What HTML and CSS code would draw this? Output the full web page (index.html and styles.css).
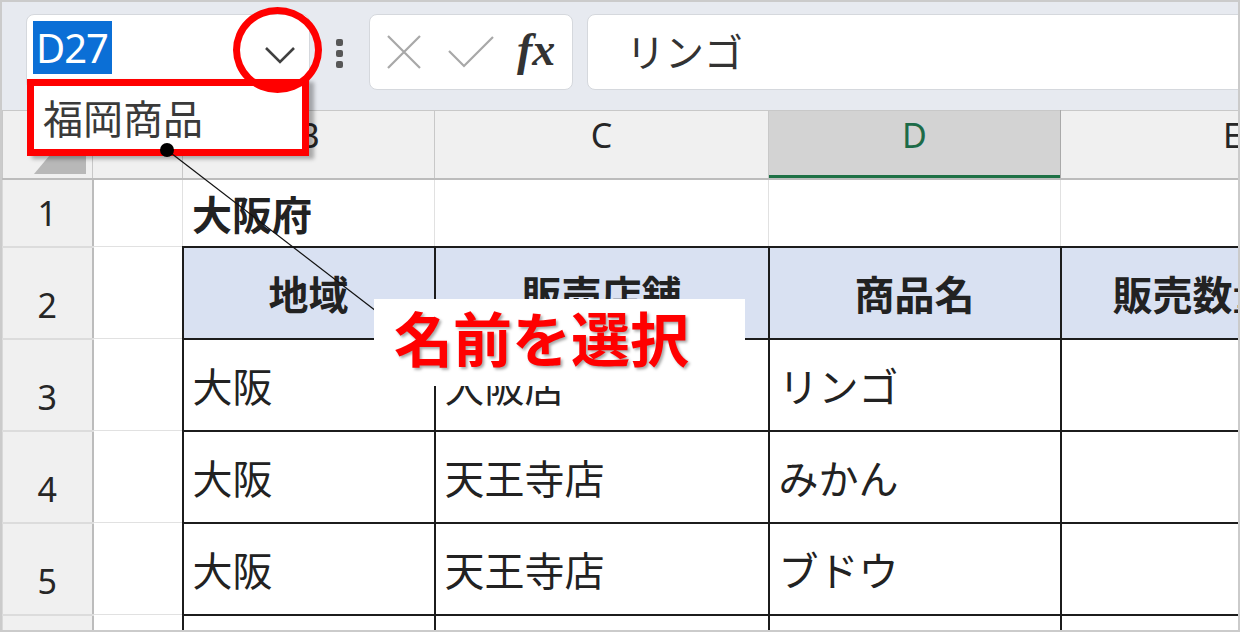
FILE: index.html
```html
<!DOCTYPE html>
<html lang="ja">
<head>
  <meta charset="UTF-8" />
  <title>名前ボックス</title>
  <link rel="stylesheet" href="styles.css">
</head>
<body>
  <div class="frame">
    <div class="toolbar">
      <div class="namebox">
        <span class="ref">D27</span>
        <svg class="chevron" width="32" height="20" viewBox="0 0 32 20"><polyline points="2,3 16,17 30,3" fill="none" stroke="#404040" stroke-width="2.6"/></svg>
      </div>
      <div class="grip"><i></i><i></i><i></i></div>
      <div class="fxbox">
        <svg class="ico-x" width="34" height="34" viewBox="0 0 34 34"><path d="M1 1 L33 33 M33 1 L1 33" stroke="#a8a8a8" stroke-width="2.2"/></svg>
        <svg class="ico-ok" width="46" height="32" viewBox="0 0 46 32"><polyline points="1,15 16,30 45,1" fill="none" stroke="#a8a8a8" stroke-width="2.2"/></svg>
        <span class="fx">fx</span>
      </div>
      <div class="formula">リンゴ</div>
    </div>

    <table class="sheet">
      <colgroup>
        <col style="width:90px"><col style="width:90px"><col style="width:252px"><col style="width:334px"><col style="width:292px"><col style="width:344px">
      </colgroup>
      <thead>
        <tr>
          <th class="corner"><svg width="52" height="62" viewBox="0 0 52 62"><polygon points="0,62 52,62 52,0" fill="#b8b8b8"/></svg></th>
          <th>A</th><th>B</th><th>C</th><th class="sel">D</th><th>E</th>
        </tr>
      </thead>
      <tbody>
        <tr class="r1"><th class="rh">1</th><td></td><td class="title">大阪府</td><td></td><td></td><td></td></tr>
        <tr class="r2"><th class="rh">2</th><td></td><td class="t hd">地域</td><td class="t hd">販売店舗</td><td class="t hd">商品名</td><td class="t hd wide">販売数量（個）</td></tr>
        <tr class="rr"><th class="rh">3</th><td></td><td class="t">大阪</td><td class="t">大阪店</td><td class="t">リンゴ</td><td class="t"></td></tr>
        <tr class="rr"><th class="rh">4</th><td></td><td class="t">大阪</td><td class="t">天王寺店</td><td class="t">みかん</td><td class="t"></td></tr>
        <tr class="rr"><th class="rh">5</th><td></td><td class="t">大阪</td><td class="t">天王寺店</td><td class="t">ブドウ</td><td class="t"></td></tr>
        <tr class="rr"><th class="rh"></th><td></td><td class="t"></td><td class="t"></td><td class="t"></td><td class="t"></td></tr>
      </tbody>
    </table>

    <div class="namelist">福岡商品</div>
    <div class="ring"></div>
    <svg class="leader" width="1240" height="632" viewBox="0 0 1240 632">
      <line x1="167" y1="150" x2="376" y2="311" stroke="#111" stroke-width="1.2"/>
      <circle cx="167" cy="150" r="7" fill="#000"/>
    </svg>
    <div class="callout">名前を選択</div>
  </div>
</body>
</html>
```

FILE: styles.css
```css
body {
  margin: 0;
  background: #fff;
  font-family: "Noto Sans", "Noto Sans CJK JP", sans-serif;
  color: #222;
}
.frame {
  position: relative;
  width: 1240px;
  height: 632px;
  box-sizing: border-box;
  border: 2px solid #cbcbcb;
  overflow: hidden;
  background: #fff;
}

/* formula bar */
.toolbar {
  height: 108px;
  box-sizing: border-box;
  background: #e7eaf0;
  display: flex;
  align-items: flex-start;
  padding: 12px 0 0 24px;
}
.namebox {
  width: 284px;
  height: 76px;
  flex: none;
  box-sizing: border-box;
  background: #fff;
  border: 1px solid #d5d8dd;
  border-radius: 8px;
  display: flex;
  align-items: flex-start;
  justify-content: space-between;
  padding: 6px 13px 0 6px;
}
.ref {
  background: #0b6fd6;
  color: #fff;
  font-size: 40px;
  letter-spacing: -1px;
  line-height: 53px;
  height: 53px;
  padding: 0 4px 0 3px;
}
.chevron {
  margin-top: 24px;
}
.grip {
  margin: 25px 0 0 26px;
  display: flex;
  flex-direction: column;
  gap: 4px;
}
.grip i {
  display: block;
  width: 7px;
  height: 7px;
  border-radius: 2px;
  background: #575757;
}
.fxbox {
  margin-left: 26px;
  width: 204px;
  height: 76px;
  flex: none;
  box-sizing: border-box;
  background: #fff;
  border: 1px solid #d5d8dd;
  border-radius: 8px;
  display: flex;
  align-items: center;
  padding-left: 17px;
}
.ico-x {
  margin-right: 27px;
}
.fx {
  margin-left: 23px;
  font-family: "Liberation Serif", serif;
  font-style: italic;
  font-weight: bold;
  font-size: 46px;
  color: #333;
  line-height: 1;
  margin-top: -4px;
}
.formula {
  margin-left: 14px;
  margin-right: -20px;
  flex: 1;
  height: 76px;
  box-sizing: border-box;
  background: #fff;
  border: 1px solid #d5d8dd;
  border-radius: 8px;
  padding-left: 38px;
  font-family: "Noto Sans CJK JP", sans-serif;
  font-size: 39px;
  line-height: 70px;
  color: #333;
}

/* sheet grid */
.sheet {
  border-collapse: collapse;
  table-layout: fixed;
  width: 1402px;
}
.sheet th,
.sheet td {
  border: 1px solid #e1e1e1;
  padding: 0 9px;
  white-space: nowrap;
  overflow: hidden;
  font-family: "Noto Sans CJK JP", sans-serif;
  font-size: 40px;
  line-height: 48px;
  font-weight: normal;
  text-align: left;
  vertical-align: middle;
}
.sheet thead th {
  height: 68px;
  box-sizing: border-box;
  background: #f0f0f0;
  border: 1px solid #c8c8c8;
  border-bottom: 2px solid #bcbcbc;
  font-family: "Noto Sans", sans-serif;
  font-size: 34px;
  line-height: 40px;
  text-align: center;
  vertical-align: top;
  padding-top: 4px;
  color: #262626;
}
.sheet thead th.corner {
  text-align: right;
  vertical-align: bottom;
  padding: 0 6px 4px 0;
  line-height: 0;
}
.sheet thead th.sel {
  background: #d3d3d3;
  color: #1d6b48;
  border-right-color: #a9a9a9;
  box-shadow: inset 0 -3px 0 #1e7145;
}
.sheet .rh {
  background: #f0f0f0;
  border: 1px solid #d9d9d9;
  border-right: 2px solid #bcbcbc;
  border-bottom: 2px solid #dcdcdc;
  font-family: "Noto Sans", sans-serif;
  font-size: 34px;
  line-height: 40px;
  text-align: center;
  vertical-align: bottom;
  padding-bottom: 13px;
  color: #262626;
}
.r1 { height: 68px; }
.r2 { height: 92px; }
.rr { height: 92px; }
.sheet td.title {
  font-weight: bold;
}
.sheet td.t {
  border: 2px solid #1c1c1c;
}
.sheet td.hd {
  background: #d9e1f2;
  font-weight: bold;
  text-align: center;
}
.sheet td.wide {
  text-align: left;
  padding-left: 51px;
}

/* annotations laid over the screenshot */
.namelist {
  position: absolute;
  left: 25px;
  top: 77px;
  width: 282px;
  height: 77px;
  box-sizing: border-box;
  border: 7px solid #ff0000;
  background: #fff;
  box-shadow: 5px 3px 4px rgba(0, 0, 0, 0.3);
  padding-left: 9px;
  font-family: "Noto Sans CJK JP", sans-serif;
  font-size: 40px;
  line-height: 62px;
  color: #3a3a3a;
}
.ring {
  position: absolute;
  left: 231px;
  top: 5px;
  width: 89px;
  height: 86px;
  box-sizing: border-box;
  border: 7px solid #ff0000;
  border-radius: 50%;
}
.leader {
  position: absolute;
  left: -2px;
  top: -2px;
}
.callout {
  position: absolute;
  left: 372px;
  top: 297px;
  width: 371px;
  height: 87px;
  box-sizing: border-box;
  background: #fff;
  padding: 3px 0 0 20px;
  font-family: "Noto Sans CJK JP", sans-serif;
  font-weight: bold;
  font-size: 59px;
  line-height: 70px;
  color: #ff0000;
  text-shadow: 2px 2px 3px rgba(0, 0, 0, 0.35);
}
```
